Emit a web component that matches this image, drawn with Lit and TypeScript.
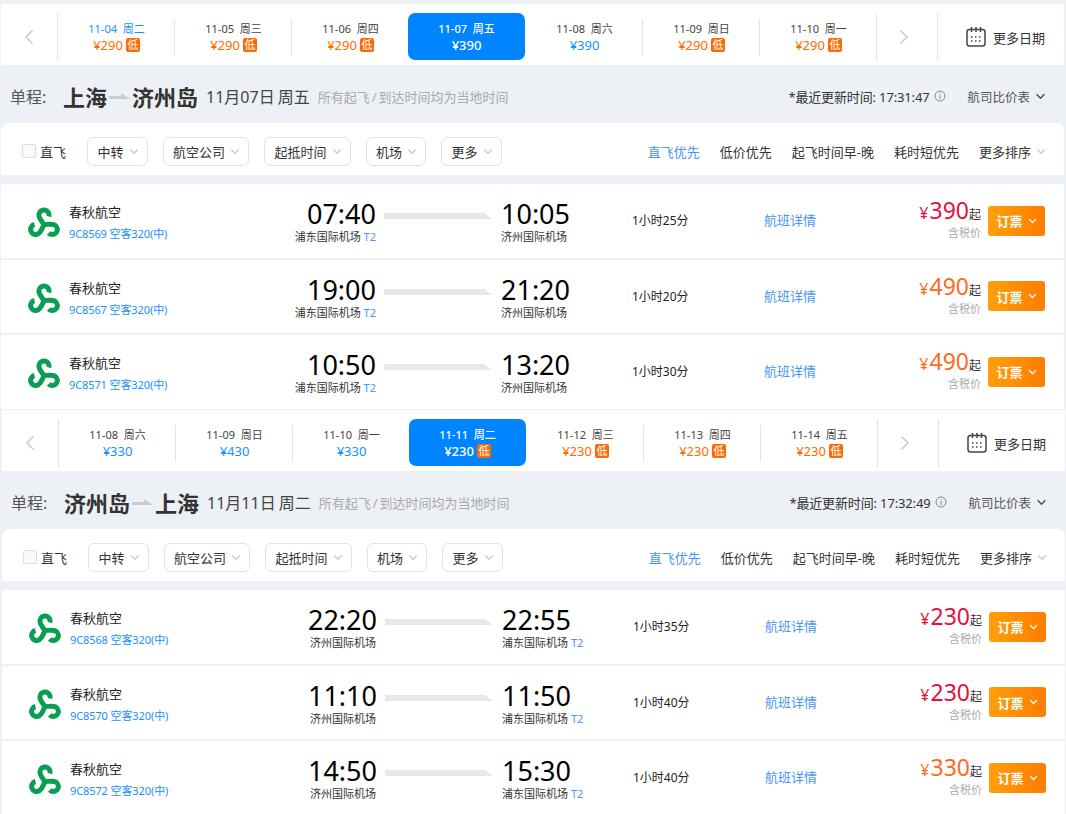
import { LitElement, html, css, svg } from "lit";
import { customElement } from "lit/decorators.js";

type Day = { d: string; w: string; p: number; low?: boolean; active?: boolean; first?: boolean };
type Fl = { no: string; dt: string; dp: string; dT?: string; at: string; ap: string; aT?: string; dur: string; price: number; hot?: boolean };
type Sec = { cls: string; from: string; to: string; date: string; upd: string; days: Day[]; flights: Fl[] };

const PD = "浦东国际机场", JN = "济州国际机场";
const sections: Sec[] = [
  {
    cls: "s1", from: "上海", to: "济州岛", date: "11月07日 周五", upd: "17:31:47",
    days: [
      { d: "11-04", w: "周二", p: 290, low: true, first: true },
      { d: "11-05", w: "周三", p: 290, low: true },
      { d: "11-06", w: "周四", p: 290, low: true },
      { d: "11-07", w: "周五", p: 390, active: true },
      { d: "11-08", w: "周六", p: 390 },
      { d: "11-09", w: "周日", p: 290, low: true },
      { d: "11-10", w: "周一", p: 290, low: true },
    ],
    flights: [
      { no: "9C8569", dt: "07:40", dp: PD, dT: "T2", at: "10:05", ap: JN, dur: "1小时25分", price: 390, hot: true },
      { no: "9C8567", dt: "19:00", dp: PD, dT: "T2", at: "21:20", ap: JN, dur: "1小时20分", price: 490 },
      { no: "9C8571", dt: "10:50", dp: PD, dT: "T2", at: "13:20", ap: JN, dur: "1小时30分", price: 490 },
    ],
  },
  {
    cls: "s2", from: "济州岛", to: "上海", date: "11月11日 周二", upd: "17:32:49",
    days: [
      { d: "11-08", w: "周六", p: 330 },
      { d: "11-09", w: "周日", p: 430 },
      { d: "11-10", w: "周一", p: 330 },
      { d: "11-11", w: "周二", p: 230, low: true, active: true },
      { d: "11-12", w: "周三", p: 230, low: true },
      { d: "11-13", w: "周四", p: 230, low: true },
      { d: "11-14", w: "周五", p: 230, low: true },
    ],
    flights: [
      { no: "9C8568", dt: "22:20", dp: JN, at: "22:55", ap: PD, aT: "T2", dur: "1小时35分", price: 230, hot: true },
      { no: "9C8570", dt: "11:10", dp: JN, at: "11:50", ap: PD, aT: "T2", dur: "1小时40分", price: 230, hot: true },
      { no: "9C8572", dt: "14:50", dp: JN, at: "15:30", ap: PD, aT: "T2", dur: "1小时40分", price: 330 },
    ],
  },
];

const chev = (cls = "chev") => html`<svg class=${cls} viewBox="0 0 12 8"><path d="M1.5 1.5 6 6l4.5-4.5" fill="none" stroke="currentColor" stroke-width="1.8"/></svg>`;

const arm = svg`<path d="M4.4-7.4A4.6 4.6 0 1 0-4.6-9C-4.6-5.5-2-3 0 0" fill="none" stroke="#0a9e52" stroke-width="4.5" stroke-linecap="butt"/>`;
const logo = html`<svg class="logo" viewBox="-14.5 -14.5 29 29">
  <g transform="translate(0 1.5)">
    ${arm}
    <g transform="rotate(120)">${arm}</g>
    <g transform="rotate(240)">${arm}</g>
  </g>
</svg>`;

@customElement("app-root")
export class AppRoot extends LitElement {
  static styles = css`
    :host { display: block; width: 1066px; height: 814px; overflow: hidden; background: #edf0f5; color: #333;
      font-family: "Noto Sans", "Noto Sans CJK SC", sans-serif; font-size: 12px; }
    svg { display: block; }
    .sec { width: 1063px; height: 406px; padding-top: 4px; box-sizing: border-box; }
    .s1 { margin-left: 1px; }
    .s2 { margin-left: 2px; }

    .dates { display: flex; height: 61px; background: #fff; align-items: center; }
    .nav { display: flex; align-items: center; justify-content: center; height: 48px; color: #ccc; box-sizing: border-box; margin-top: 5px; }
    .nav svg { width: 10px; height: 16px; }
    .nav.prev { width: 57px; border-right: 1px solid #e4e4e4; }
    .nav.next { width: 62px; margin-left: -1px; padding-right: 7px; border-left: 1px solid #e4e4e4; border-right: 1px solid #e4e4e4; }
    .day { width: 117px; box-sizing: border-box; height: 47px; margin-top: 4px; display: flex; flex-direction: column; align-items: center; justify-content: center; position: relative; color: #444; font-size: 11px; }
    .day .l1 { height: 16px; line-height: 16px; white-space: pre; }
    .day .l2 { height: 16px; line-height: 16px; display: flex; align-items: center; gap: 3px; font-size: 13px; color: #1890ff; }
    .day.low .l2 { color: #ff6a00; }
    .day.sep::after { content: ""; position: absolute; right: 0; top: 6px; height: 37px; width: 1px; background: #e4e4e4; }
    .day.first .l1 { color: #1890ff; }
    .day.on { width: 117px; margin-left: -1px; margin-right: 1px; background: #0084ff; border-radius: 7px; color: #fff; font-weight: 500; }
    .day.on .l2 { color: #fff; }
    .badge { width: 14px; height: 14px; background: #ff6a00; color: #fff; font-size: 11px; line-height: 14px; text-align: center; border-radius: 2px; font-weight: 400; }
    .more { flex: 1; display: flex; align-items: center; gap: 6px; padding-left: 27px; font-size: 13px; color: #333; margin-top: 5px; }
    .more svg { width: 22px; height: 22px; }

    .title { height: 58px; box-sizing: border-box; padding: 4px 18px 0 9px; display: flex; align-items: center; }
    .title .lab { font-size: 16px; color: #555; width: 53px; }
    .title .city { font-size: 22px; font-weight: 700; color: #333; }
    .title svg.pl { width: 21px; height: 8px; margin: 0 2px; }
    .title .dt { font-size: 16px; color: #444; margin-left: 8px; word-spacing: -1px; }
    .title .note { font-size: 13px; color: #aaa; margin-left: 8px; word-spacing: -1.5px; }
    .title .sp { flex: 1; }
    .title .upd { color: #333; font-size: 13px; letter-spacing: -0.15px; }
    .title svg.inf { width: 12px; height: 12px; margin-left: 5px; }
    .title .cmp { margin-left: 21px; font-size: 12.5px; color: #555; }
    .title svg.cv { width: 11px; height: 7px; margin-left: 5px; color: #555; }

    .filter { height: 52px; background: #fff; border-radius: 8px 8px 0 0; display: flex; align-items: center; padding: 4px 18px 0 21px; margin-bottom: 9px; font-size: 13px; color: #333; box-sizing: border-box; }
    .cb { width: 12px; height: 12px; border: 1px solid #ddd; border-radius: 2px; background: #fafafa; }
    .direct { margin: 0 21px 0 4px; }
    .dd { height: 29px; box-sizing: border-box; border: 1px solid #e3e3e3; border-radius: 6px; display: flex; align-items: center; gap: 5px; padding: 0 8px 0 9.5px; margin-right: 15px; }
    .chev { width: 10px; height: 7px; color: #ccc; }
    .sp { flex: 1; }
    .sort { margin-left: 20px; }
    .sort.on { color: #4a94f5; margin-left: 0; }
    .sort.m { display: flex; align-items: center; gap: 5px; }

    .row { height: 73.5px; margin-bottom: 2px; background: #fff; position: relative; }
    .logo { width: 32px; height: 32px; }
    .lg { position: absolute; left: 27px; top: 23px; }
    .air { position: absolute; left: 68px; top: 19px; }
    .air .nm { font-size: 13px; color: #222; line-height: 18px; }
    .air .no { font-size: 11px; color: #1890ff; line-height: 18px; margin-top: 4px; letter-spacing: -0.1px; }
    .tm { font-size: 27px; line-height: 32px; color: #000; }
    .ap { font-size: 11px; line-height: 14px; color: #333; white-space: nowrap; }
    .ap b { color: #4a94f5; font-weight: 400; }
    .dep { position: absolute; right: 688px; top: 14px; text-align: right; display: flex; flex-direction: column; align-items: flex-end; }
    .s2 .dep .ap { padding-right: 1px; }
    .arr { position: absolute; left: 500px; top: 14px; }
    .arrow { position: absolute; left: 383px; top: 28px; width: 108px; height: 7px; }
    .dur { position: absolute; left: 631px; top: 29px; font-size: 12px; color: #222; line-height: 16px; }
    .det { position: absolute; left: 763px; top: 26px; font-size: 13px; color: #4a94f5; line-height: 20px; }
    .pr { position: absolute; right: 83px; top: 11px; display: flex; flex-direction: column; align-items: flex-end; }
    .pr .top { display: flex; align-items: baseline; color: #ff6a1a; }
    .pr.hot .top { color: #e60f3c; }
    .pr .cy { font-size: 16px; margin-right: 1px; }
    .pr .v { font-size: 23px; line-height: 30px; }
    .pr .q { font-size: 12px; color: #333; }
    .pr .tx { font-size: 11px; color: #aaa; line-height: 14px; margin-top: 1px; }
    .btn { position: absolute; left: 987px; top: 21.7px; width: 57px; height: 30px; border-radius: 3px; background: linear-gradient(90deg, #ff9f0a, #ff7c00); color: #fff; font-size: 13px; font-weight: 700; display: flex; align-items: center; justify-content: center; gap: 5px; box-sizing: border-box; }
    .btn svg { width: 9px; height: 6px; }
  `;

  private dayTpl(d: Day, i: number, all: Day[]) {
    const nextOn = all[i + 1]?.active;
    const cls = ["day", d.low ? "low" : "", d.first ? "first" : "", d.active ? "on" : "", !d.active && !nextOn && i < 6 ? "sep" : ""].join(" ");
    return html`<div class=${cls}>
      <div class="l1">${d.d}  ${d.w}</div>
      <div class="l2">¥${d.p}${d.low ? html`<span class="badge">低</span>` : ""}</div>
    </div>`;
  }

  private fl(f: Fl) {
    return html`<div class="row">
      <div class="lg">${logo}</div>
      <div class="air"><div class="nm">春秋航空</div><div class="no">${f.no} 空客320(中)</div></div>
      <div class="dep"><div class="tm">${f.dt}</div><div class="ap">${f.dp}${f.dT ? html` <b>${f.dT}</b>` : ""}</div></div>
      <svg class="arrow" viewBox="0 0 108 7"><path d="M0 1h99l0-1 9 7H0z" fill="#e8e8e8"/></svg>
      <div class="arr"><div class="tm">${f.at}</div><div class="ap">${f.ap}${f.aT ? html` <b>${f.aT}</b>` : ""}</div></div>
      <div class="dur">${f.dur}</div>
      <div class="det">航班详情</div>
      <div class="pr ${f.hot ? "hot" : ""}">
        <div class="top"><span class="cy">¥</span><span class="v">${f.price}</span><span class="q">起</span></div>
        <div class="tx">含税价</div>
      </div>
      <div class="btn">订票${chev("")}</div>
    </div>`;
  }

  render() {
    return sections.map((s) => html`<section class="sec ${s.cls}">
      <div class="dates">
        <div class="nav prev"><svg viewBox="0 0 10 16"><path d="M8.5 1.5 2 8l6.5 6.5" fill="none" stroke="currentColor" stroke-width="1.6"/></svg></div>
        ${s.days.map((d, i, a) => this.dayTpl(d, i, a))}
        <div class="nav next"><svg viewBox="0 0 10 16"><path d="M1.5 1.5 8 8l-6.5 6.5" fill="none" stroke="currentColor" stroke-width="1.6"/></svg></div>
        <div class="more">
          <svg viewBox="0 0 22 22" fill="none" stroke="#444" stroke-width="1.5"><rect x="2" y="3.5" width="18" height="16.5" rx="2.5"/><path d="M6.5 1v5M11 1v5M15.5 1v5"/><path d="M6 11h2M10 11h2M14 11h2M6 15h2M10 15h2M14 15h2" stroke-width="1.4" stroke-dasharray="1.5 .5"/></svg>
          更多日期
        </div>
      </div>
      <div class="title">
        <span class="lab">单程:</span>
        <span class="city">${s.from}</span>
        <svg class="pl" viewBox="0 0 21 8"><path d="M0 4h12l0-3 9 6H0z" fill="#ccc"/></svg>
        <span class="city">${s.to}</span>
        <span class="dt">${s.date}</span>
        <span class="note">所有起飞 / 到达时间均为当地时间</span>
        <span class="sp"></span>
        <span class="upd">*最近更新时间: ${s.upd}</span>
        <svg class="inf" viewBox="0 0 12 12" fill="none" stroke="#888"><circle cx="6" cy="6" r="5"/><path d="M6 5v4M6 3v1"/></svg>
        <span class="cmp">航司比价表</span>
        ${chev("cv")}
      </div>
      <div class="filter">
        <span class="cb"></span><span class="direct">直飞</span>
        ${["中转", "航空公司", "起抵时间", "机场", "更多"].map((t) => html`<div class="dd">${t}${chev()}</div>`)}
        <span class="sp"></span>
        <span class="sort on">直飞优先</span>
        <span class="sort">低价优先</span>
        <span class="sort">起飞时间早-晚</span>
        <span class="sort">耗时短优先</span>
        <span class="sort m">更多排序${chev()}</span>
      </div>
      ${s.flights.map((f) => this.fl(f))}
    </section>`);
  }
}
